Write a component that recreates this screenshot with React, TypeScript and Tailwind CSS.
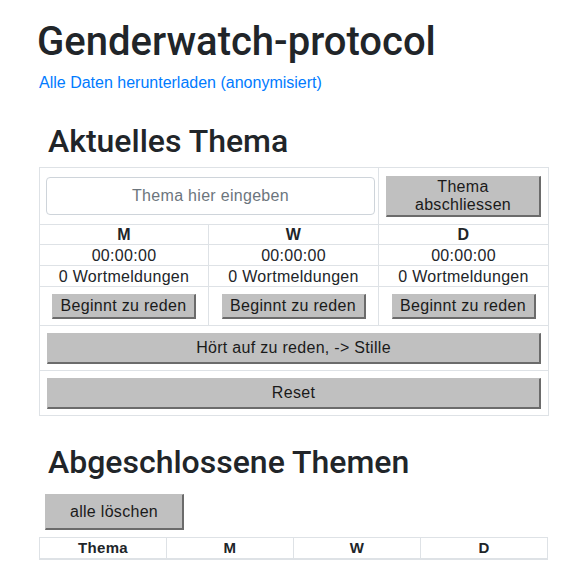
import { useState } from 'react'

const btn =
  'bg-[#c0c0c0] text-[#1a1a1a] border border-[#c0c0c0] border-r-2 border-b-2 border-r-[#6b6b6b] border-b-[#6b6b6b]'

const people = ['M', 'W', 'D']
const heading = "font-['Roboto','Liberation_Sans',Arial,sans-serif] font-medium"

export default function App() {
  const [topic, setTopic] = useState('')

  return (
    <div className="min-h-[581px] bg-white pl-[39px] pr-[33px] text-[#212529] tracking-[0.3px] font-['Liberation_Sans',Arial,sans-serif]">
      <h1 className={`${heading} pt-[18px] -ml-[2px] text-[40px] leading-[48px] tracking-normal`}>Genderwatch-protocol</h1>
      <a href="#" className="mt-[5px] block text-[16px] leading-[24px] text-[#007bff] tracking-normal">
        Alle Daten herunterladen (anonymisiert)
      </a>

      <h2 className={`${heading} mt-[27px] ml-[9px] text-[32px] leading-[38px] tracking-normal`}>Aktuelles Thema</h2>

      <table className="mt-[7px] w-[509px] table-fixed border-collapse text-[16px] leading-[19px]">
        <colgroup>
          <col className="w-[169px]" />
          <col className="w-[170px]" />
          <col className="w-[170px]" />
        </colgroup>
        <tbody>
          <tr className="h-[57px]">
            <td colSpan={2} className="border border-[#dee2e6] pl-[6px] pr-[3px] align-middle">
              <input
                value={topic}
                onChange={e => setTopic(e.target.value)}
                placeholder="Thema hier eingeben"
                className="block h-[38px] w-full rounded-[4px] border border-[#ced4da] text-center text-[16px] text-[#495057] placeholder:text-[#6c757d] outline-none"
              />
            </td>
            <td className="border border-[#dee2e6] px-[7px] align-middle">
              <button className={`${btn} block h-[41px] w-full leading-[18px]`}>
                Thema
                <br />
                abschliessen
              </button>
            </td>
          </tr>
          <tr className="h-[20px]">
            {people.map(p => (
              <td key={p} className="border border-[#dee2e6] p-0 text-center font-bold">{p}</td>
            ))}
          </tr>
          <tr className="h-[21px]">
            {people.map(p => (
              <td key={p} className="border border-[#dee2e6] p-0 text-center">00:00:00</td>
            ))}
          </tr>
          <tr className="h-[21px]">
            {people.map(p => (
              <td key={p} className="border border-[#dee2e6] p-0 text-center">0 Wortmeldungen</td>
            ))}
          </tr>
          <tr className="h-[39px]">
            {people.map(p => (
              <td key={p} className="border border-[#dee2e6] p-0 text-center align-middle">
                <button className={`${btn} h-[25px] w-[144px] leading-[19px]`}>Beginnt zu reden</button>
              </td>
            ))}
          </tr>
          <tr className="h-[45px]">
            <td colSpan={3} className="border border-[#dee2e6] px-[7px] align-middle">
              <button className={`${btn} block h-[31px] w-full`}>Hört auf zu reden, -&gt; Stille</button>
            </td>
          </tr>
          <tr className="h-[45px]">
            <td colSpan={3} className="border border-[#dee2e6] px-[7px] align-middle">
              <button className={`${btn} block h-[31px] w-full`}>Reset</button>
            </td>
          </tr>
        </tbody>
      </table>

      <h2 className={`${heading} mt-[27px] ml-[9px] text-[32px] leading-[38px] tracking-normal`}>Abgeschlossene Themen</h2>
      <button className={`${btn} mt-[13px] ml-[6px] block h-[36px] w-[139px] text-[16px]`}>alle löschen</button>

      <table className="mt-[7px] w-[509px] table-fixed border-collapse text-[15px]">
        <thead>
          <tr className="h-[21px]">
            {['Thema', 'M', 'W', 'D'].map(h => (
              <th key={h} className="border border-b-2 border-[#dee2e6] p-0 text-center font-bold leading-[18px]">{h}</th>
            ))}
          </tr>
        </thead>
      </table>
    </div>
  )
}
